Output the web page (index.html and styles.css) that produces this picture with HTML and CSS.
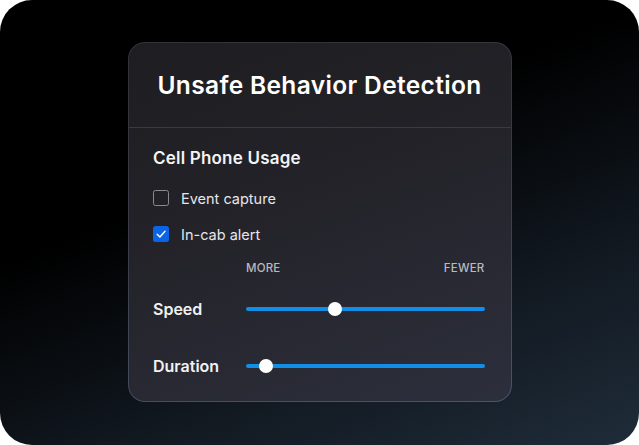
FILE: index.html
```html
<!DOCTYPE html>
<html>
<head>
<meta charset="utf-8">
<link rel="stylesheet" href="styles.css">
</head>
<body>
<div class="frame">
  <div class="card">
    <div class="card-header">
      <h1 class="title">Unsafe Behavior Detection</h1>
    </div>
    <div class="card-body">
      <h2 class="section-title">Cell Phone Usage</h2>
      <div class="check-row">
        <span class="checkbox"></span>
        <span class="check-label">Event capture</span>
      </div>
      <div class="check-row">
        <span class="checkbox checked">
          <svg viewBox="0 0 16 16" width="16" height="16"><path d="M4.2 8.3 L6.9 11 L12 5.2" fill="none" stroke="#fff" stroke-width="1.4" stroke-linecap="round" stroke-linejoin="round"/></svg>
        </span>
        <span class="check-label">In-cab alert</span>
      </div>
      <div class="sliders">
        <div class="scale-labels">
          <span>MORE</span>
          <span>FEWER</span>
        </div>
        <div class="slider-row">
          <span class="slider-label">Speed</span>
          <div class="slider">
            <div class="track"></div>
            <div class="thumb" style="left: 37.2%"></div>
          </div>
        </div>
        <div class="slider-row">
          <span class="slider-label">Duration</span>
          <div class="slider">
            <div class="track"></div>
            <div class="thumb" style="left: 8.4%"></div>
          </div>
        </div>
      </div>
    </div>
  </div>
</div>
</body>
</html>
```

FILE: styles.css
```css
html, body {
  margin: 0;
  padding: 0;
  background: #ffffff;
}
body {
  font-family: Inter, "Noto Sans", "Liberation Sans", sans-serif;
  width: 639px;
  height: 445px;
  overflow: hidden;
}
.frame {
  width: 639px;
  height: 445px;
  border-radius: 32px;
  background: linear-gradient(158deg, #000000 38%, #111820 70%, #1f2c39 100%);
  display: flex;
  justify-content: center;
  padding-top: 42px;
  box-sizing: border-box;
}
.card {
  width: 384px;
  height: 360px;
  box-sizing: border-box;
  border: 1.5px solid transparent;
  border-radius: 17px;
  background:
    linear-gradient(160deg, #1e1d21 0%, #232228 40%, #2c2f3c 100%) padding-box,
    linear-gradient(170deg, #323136 0%, #3a3d4a 50%, #4a546b 100%) border-box;
  display: flex;
  flex-direction: column;
}
.card-header {
  height: 84px;
  border-bottom: 1px solid #3b3a40;
  display: flex;
  align-items: center;
  justify-content: center;
}
.title {
  margin: 0;
  font-size: 24.5px;
  font-weight: 600;
  color: #ffffff;
  letter-spacing: 0.35px;
}
.card-body {
  padding: 20px 26px 0 24.5px;
  color: #ffffff;
}
.section-title {
  margin: 0 0 21px 0;
  font-size: 17px;
  font-weight: 600;
  line-height: 20px;
  color: #f3f3f5;
  letter-spacing: 0.2px;
}
.check-row {
  display: flex;
  align-items: center;
  gap: 12px;
  height: 18px;
  margin-bottom: 18px;
}
.checkbox {
  width: 16px;
  height: 16px;
  box-sizing: border-box;
  border: 1.5px solid #8a8a90;
  border-radius: 2.5px;
  display: flex;
}
.checkbox.checked {
  border: none;
  background: #0b63e5;
}
.check-label {
  font-size: 14.5px;
  color: #e6e6ea;
}
.sliders {
  margin-top: 10px;
}
.scale-labels {
  margin-left: 93px;
  display: flex;
  justify-content: space-between;
  font-size: 11.5px;
  font-weight: 500;
  color: #b9bac0;
  letter-spacing: 0.2px;
  height: 14px;
}
.slider-row {
  display: grid;
  grid-template-columns: 93px 1fr;
  align-items: center;
  height: 20px;
  margin-top: 24px;
}
.slider-row + .slider-row {
  margin-top: 37px;
}
.slider-label {
  font-size: 16px;
  font-weight: 600;
  color: #f1f1f3;
}
.slider {
  position: relative;
  height: 20px;
}
.track {
  position: absolute;
  left: 0;
  right: 0;
  top: 8px;
  height: 4px;
  border-radius: 2px;
  background: #118ee8;
}
.thumb {
  position: absolute;
  top: 3px;
  width: 14px;
  height: 14px;
  margin-left: -7px;
  border-radius: 50%;
  background: #ffffff;
}
.thumb::before {
  content: "";
  position: absolute;
  left: 6px;
  top: -4px;
  width: 2px;
  height: 22px;
  background: #118ee8;
  z-index: -1;
}
```
